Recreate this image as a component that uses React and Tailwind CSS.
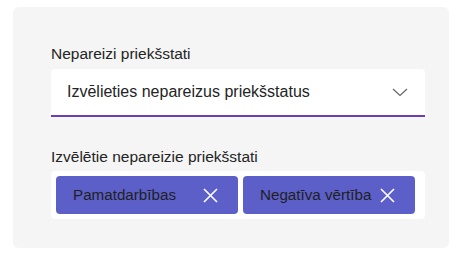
export default function App() {
  const tags = [
    { id: 1, label: "Pamatdarbības", w: "w-[182px]" },
    { id: 2, label: "Negatīva vērtība", w: "w-[172px]" },
  ];

  return (
    <div className="min-h-screen bg-white pl-[13px] pt-[7px] font-['Liberation_Sans',Arial,sans-serif]">
      <div className="w-[436px] h-[241px] rounded-md bg-[#f5f5f5] pl-[38px] pr-[24px] pt-[37px]">
        {/* Dropdown */}
        <div className="mb-[5px] text-[15.5px] leading-[20px] text-[#242424]">
          Nepareizi priekšstati
        </div>
        <div className="flex h-[48px] items-center justify-between rounded-t-[4px] border-b-2 border-[#6a40b0] bg-white pl-[16px] pr-[17px]">
          <span className="text-[16px] text-[#242424]">
            Izvēlieties nepareizus priekšstatus
          </span>
          <svg width="16" height="9" viewBox="0 0 16 9" fill="none">
            <path d="M1 1l7 6.5L15 1" stroke="#616161" strokeWidth="1.1" />
          </svg>
        </div>

        {/* Selected */}
        <div className="mt-[30px] mb-[4px] text-[15.5px] leading-[20px] text-[#242424]">
          Izvēlētie nepareizie priekšstati
        </div>
        <div className="flex h-[48px] items-center gap-[5px] rounded-[4px] bg-white px-[5px]">
          {tags.map((t) => (
            <div
              key={t.id}
              className={`flex h-[38px] items-center justify-between rounded-[4px] bg-[#5b5fc7] pl-[17px] pr-[20px] ${t.w}`}
            >
              <span className="text-[15.2px] text-[#1f1f1f]">{t.label}</span>
              <svg width="15" height="15" viewBox="0 0 15 15" fill="none">
                <path d="M1 1l13 13M14 1L1 14" stroke="white" strokeWidth="1.6" />
              </svg>
            </div>
          ))}
        </div>
      </div>
    </div>
  );
}
